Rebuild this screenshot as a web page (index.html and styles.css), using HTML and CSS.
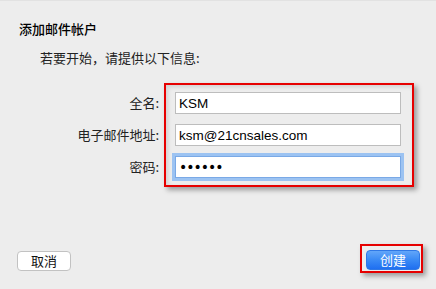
FILE: index.html
```html
<!DOCTYPE html>
<html lang="zh-CN">
<head>
    <meta charset="UTF-8">
    <meta name="viewport" content="width=device-width, initial-scale=1.0">
    <title>添加邮件帐户</title>
    <link rel="stylesheet" href="styles.css">
</head>
<body>
    <div class="sheet">
        <h1 class="sheet-title">添加邮件帐户</h1>
        <p class="sheet-intro">若要开始，请提供以下信息:</p>

        <!-- Formulaire -->
        <div class="account-form">
            <div class="labels">
                <label class="field-label" for="full-name">全名:</label>
                <label class="field-label" for="email">电子邮件地址:</label>
                <label class="field-label" for="password">密码:</label>
            </div>
            <div class="fields highlight">
                <input type="text" class="field-input" id="full-name" value="KSM">
                <input type="text" class="field-input" id="email" value="ksm@21cnsales.com">
                <input type="password" class="field-input focused" id="password" value="123456">
            </div>
        </div>

        <!-- Boutons -->
        <div class="sheet-footer">
            <button class="btn btn-cancel">取消</button>
            <div class="highlight highlight-btn">
                <button class="btn btn-primary">创建</button>
            </div>
        </div>
    </div>
</body>
</html>
```

FILE: styles.css
```css
body {
    margin: 0;
    padding: 0;
    background: #ededed;
    font-family: "Noto Sans CJK SC", "Liberation Sans", sans-serif;
    color: #1a1a1a;
}

.sheet {
    height: 289px;
    box-sizing: border-box;
    padding-top: 20px;
    border-top: 1px solid #e2e2e2;
}

.sheet-title {
    margin: 0 0 13px 19px;
    font-size: 13px;
    line-height: 16px;
    font-weight: 500;
    color: #000;
}

.sheet-intro {
    margin: 0 0 17px 40px;
    font-size: 13px;
    line-height: 16px;
    color: #222;
}

.account-form {
    display: flex;
}

.labels {
    width: 159px;
    display: flex;
    flex-direction: column;
    gap: 10px;
    padding-top: 9px;
}

.field-label {
    height: 22px;
    line-height: 22px;
    font-size: 13px;
    text-align: right;
    color: #222;
}

.highlight {
    border: 2px solid #e60000;
    box-shadow: 3px 3px 5px rgba(0,0,0,0.35), inset 2px 2px 4px rgba(0,0,0,0.12);
}

.fields {
    margin-left: 5px;
    padding: 7px 11px 7px 9px;
    display: flex;
    flex-direction: column;
    gap: 10px;
}

.field-input {
    width: 226px;
    height: 22px;
    box-sizing: border-box;
    margin: 0;
    padding: 0 3px;
    border: 1px solid #bdbdbd;
    background: #fff;
    font-family: "Liberation Sans", Arial, sans-serif;
    font-size: 13.5px;
    color: #000;
    outline: none;
}

.field-input.focused {
    border-color: #7aa9e6;
    box-shadow: 0 0 0 3px #9cc3f2;
    font-family: "DejaVu Sans", sans-serif;
    font-size: 14px;
    letter-spacing: -1px;
}

.sheet-footer {
    display: flex;
    justify-content: space-between;
    align-items: flex-end;
    margin-top: 57px;
    padding: 0 13px 0 17px;
}

.btn {
    width: 54px;
    height: 20px;
    padding: 0;
    border-radius: 4px;
    font-family: "Noto Sans CJK SC", sans-serif;
    font-size: 13px;
    line-height: 18px;
    cursor: pointer;
}

.btn-cancel {
    margin-bottom: 2px;
    background: #fff;
    border: 1px solid #c2c2c2;
    color: #111;
}

.highlight-btn {
    padding: 4px 1px 1px 4px;
    box-shadow: 3px 3px 5px rgba(0,0,0,0.35);
}

.btn-primary {
    display: block;
    border: 1px solid #2f78e6;
    background: linear-gradient(#62a6f9, #3a8af5 50%, #1f6ff0);
    color: #fff;
}
```
